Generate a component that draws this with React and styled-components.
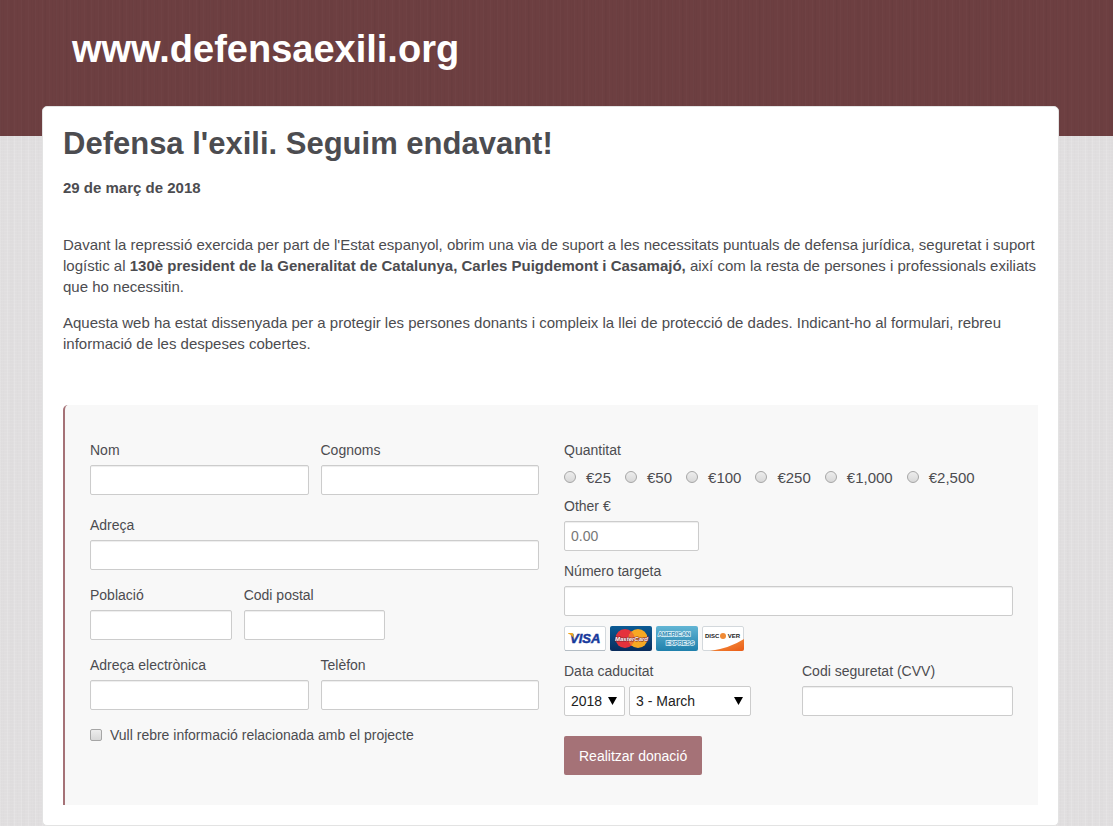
import React from "react";
import styled, { createGlobalStyle } from "styled-components";

const GlobalStyle = createGlobalStyle`
  *, *::before, *::after { box-sizing: border-box; }
  body {
    margin: 0;
    color: #4c4c50;
    font: 15px/21px "Liberation Sans", Arial, sans-serif;
    background-color: #e0dedf;
    background-image:
      repeating-linear-gradient(90deg, rgba(255,255,255,0.14) 0 1px, transparent 1px 3px, rgba(0,0,0,0.008) 3px 4px, transparent 4px 7px),
      repeating-linear-gradient(90deg, rgba(0,0,0,0.008) 0 2px, transparent 2px 11px),
      repeating-linear-gradient(0deg, rgba(255,255,255,0.06) 0 1px, transparent 1px 3px);
  }
  input, select, button { font-family: inherit; }
`;

const Header = styled.header`
  height: 136px;
  padding: 24px 72px;
  background-color: #6d3f41;
  background-image:
    repeating-linear-gradient(90deg, rgba(255,255,255,0.015) 0 1px, transparent 1px 3px, rgba(0,0,0,0.02) 3px 4px, transparent 4px 7px),
    repeating-linear-gradient(90deg, rgba(0,0,0,0.015) 0 2px, transparent 2px 11px);
`;

const SiteName = styled.h1`
  margin: 0;
  color: #fff;
  font-size: 38px;
  line-height: 50px;
`;

const Card = styled.main`
  margin: -30px 54px 0 42px;
  padding: 17px 20px 20px;
  background: #fff;
  border: 1px solid #e3e3e3;
  border-radius: 5px;
`;

const Title = styled.h2`
  margin: 0;
  font-size: 31px;
  line-height: 40px;
`;

const DateLine = styled.p`
  margin: 13px 0 36px;
  font-size: 15px;
  font-weight: bold;
`;

const Paragraph = styled.p`
  margin: 0 0 15px;
`;

const Form = styled.form`
  display: grid;
  grid-template-columns: 1fr 1fr;
  gap: 25px;
  margin-top: 51px;
  padding: 35px 25px 30px;
  background: #f8f8f8;
  border-left: 2px solid #a57277;
  border-radius: 5px 0 0 0;
`;

const Column = styled.div`
  min-width: 0;
`;

const Row = styled.div`
  display: grid;
  grid-template-columns: repeat(${(p) => p.$columns || 1}, 1fr);
  gap: 12px;
  margin-bottom: ${(p) => p.$gap || 15}px;
`;

const Label = styled.label`
  display: block;
  margin-bottom: 5px;
  font-size: 14px;
  line-height: 20px;
`;

const Legend = styled.legend`
  padding: 0;
  margin-bottom: 5px;
  font-size: 14px;
  line-height: 20px;
`;

const Input = styled.input`
  display: block;
  width: ${(p) => p.$width || "100%"};
  height: 30px;
  padding: 4px 6px;
  color: #555;
  font-size: 14px;
  background: #fff;
  border: 1px solid #ccc;
  border-radius: 2px;
  box-shadow: inset 0 1px 1px rgba(0, 0, 0, 0.075);
  &::placeholder { color: #777; }
`;

const Group = styled.fieldset`
  min-width: 0;
  margin: 0;
  padding: 0;
  border: 0;
`;

const Amounts = styled.div`
  display: flex;
  flex-wrap: wrap;
  gap: 14px;
  padding: 2px 0 8px;
`;

const Choice = styled.label`
  display: flex;
  align-items: center;
  gap: ${(p) => p.$gap || 10}px;
  font-size: ${(p) => p.$size || 15}px;
  line-height: 21px;
`;

const Tick = styled.input`
  appearance: none;
  width: 12px;
  height: 12px;
  margin: 0 0 1px;
  background: linear-gradient(#ededed, #d8d8d8);
  border: 1px solid #a6a6a6;
  border-radius: ${(p) => (p.type === "radio" ? "50%" : "2px")};
  &:checked { background: #777; }
`;

const Logos = styled.div`
  display: flex;
  gap: 4px;
  margin: -5px 0 10px;
  svg { display: block; }
`;

const CardRow = styled.div`
  display: flex;
  justify-content: space-between;
  align-items: flex-start;
  margin-bottom: 20px;
`;

const CvvField = styled.div`
  width: 47%;
`;

const Selects = styled.div`
  display: flex;
  gap: 4px;
`;

const SelectBox = styled.span`
  display: grid;
  align-items: center;
  width: ${(p) => p.$width}px;
  > * { grid-area: 1 / 1; }
  svg { justify-self: end; margin-right: 8px; pointer-events: none; }
`;

const Select = styled.select`
  appearance: none;
  width: 100%;
  height: 30px;
  padding: 0 6px;
  color: #222;
  font-size: 14px;
  background: #fff;
  border: 1px solid #ccc;
  border-radius: 2px;
`;

const Submit = styled.button`
  display: block;
  height: 39px;
  padding: 0 15px;
  color: #fff;
  font-size: 14px;
  background: #a57277;
  border: 0;
  border-radius: 2px;
`;

function Field({ id, label, ...rest }) {
  return (
    <div>
      <Label htmlFor={id}>{label}</Label>
      <Input id={id} type="text" {...rest} />
    </div>
  );
}

function Dropdown({ label, width, options }) {
  return (
    <SelectBox $width={width}>
      <Select aria-label={label}>
        {options.map((o) => <option key={o}>{o}</option>)}
      </Select>
      <svg width="9" height="8" aria-hidden="true"><path d="M0 0H9L4.500 8Z" fill="#000" /></svg>
    </SelectBox>
  );
}

function CardLogos() {
  const font = { fontFamily: "Liberation Sans, sans-serif", fontWeight: "bold" };
  return (
    <Logos>
      <svg width="42" height="25" role="img" aria-label="Visa">
        <rect x=".5" y=".5" width="41" height="24" rx="1.500" fill="#fff" stroke="#d3d8dc" />
        <path d="M1 24.500H41" stroke="#b5bdc4" />
        <text x="6" y="17" fontSize="13" fontStyle="italic" fill="#17399b" stroke="#17399b" strokeWidth=".5" {...font}>VISA</text>
        <path d="M4 7H8Q9.500 7 9.500 9L10 13Q8.500 9 4 7.500Z" fill="#f0a51c" />
      </svg>
      <svg width="42" height="25" role="img" aria-label="MasterCard">
        <defs>
          <linearGradient id="mc" x2="0" y2="1"><stop stopColor="#0b5b95" /><stop offset="1" stopColor="#0a2c5c" /></linearGradient>
        </defs>
        <rect width="42" height="25" rx="2" fill="url(#mc)" />
        <circle cx="15" cy="12.500" r="9.500" fill="#e4323c" />
        <circle cx="28" cy="12.500" r="9.500" fill="#f7a823" />
        <path d="M21.500 5.500A9.500 9.500 0 0 1 21.500 19.500A9.500 9.500 0 0 1 21.500 5.500Z" fill="#ee7430" />
        <text x="21.500" y="15" fontSize="6" fontStyle="italic" textAnchor="middle" fill="#fff" stroke="#7c2431" strokeWidth="1" paintOrder="stroke" {...font}>MasterCard</text>
      </svg>
      <svg width="42" height="25" role="img" aria-label="American Express">
        <defs>
          <linearGradient id="ax" x2="0" y2="1"><stop stopColor="#62b5d4" /><stop offset="1" stopColor="#1f80ac" /></linearGradient>
        </defs>
        <rect width="42" height="25" rx="2" fill="url(#ax)" />
        <text x="2" y="10" fontSize="6" fill="#3189b2" stroke="#d9eff7" strokeWidth="1.500" paintOrder="stroke" {...font}>AMERICAN</text>
        <text x="10" y="19" fontSize="6" fill="#3189b2" stroke="#d9eff7" strokeWidth="1.500" paintOrder="stroke" {...font}>EXPRESS</text>
      </svg>
      <svg width="42" height="25" role="img" aria-label="Discover">
        <defs>
          <linearGradient id="dc" x2="1" y2="1"><stop stopColor="#f7a04a" /><stop offset="1" stopColor="#ea5b16" /></linearGradient>
        </defs>
        <rect x=".5" y=".5" width="41" height="24" rx="1.500" fill="#fff" stroke="#d3d8dc" />
        <path d="M8 25Q28 22 42 13V23Q42 25 40 25Z" fill="url(#dc)" />
        <circle cx="21" cy="10" r="3" fill="#f08a35" />
        <text x="3" y="12" fontSize="6" fill="#222" {...font}>DISC</text>
        <text x="38" y="12" fontSize="6" textAnchor="end" fill="#222" {...font}>VER</text>
      </svg>
    </Logos>
  );
}

const amounts = ["€25", "€50", "€100", "€250", "€1,000", "€2,500"];
const years = ["2018", "2019", "2020", "2021", "2022", "2023"];
const months = ["3 - March", "4 - April", "5 - May", "6 - June", "7 - July", "8 - August", "9 - September"];

export default function App() {
  return (
    <>
      <GlobalStyle />
      <Header>
        <SiteName>www.defensaexili.org</SiteName>
      </Header>
      <Card>
        <Title>Defensa l'exili. Seguim endavant!</Title>
        <DateLine>29 de març de 2018</DateLine>
        <Paragraph>
          Davant la repressió exercida per part de l'Estat espanyol, obrim una via de suport a les necessitats
          puntuals de defensa jurídica, seguretat i suport logístic al{" "}
          <strong>130è president de la Generalitat de Catalunya, Carles Puigdemont i Casamajó,</strong> així com la
          resta de persones i professionals exiliats que ho necessitin.
        </Paragraph>
        <Paragraph>
          Aquesta web ha estat dissenyada per a protegir les persones donants i compleix la llei de protecció de
          dades. Indicant-ho al formulari, rebreu informació de les despeses cobertes.
        </Paragraph>
        <Form onSubmit={(e) => e.preventDefault()}>
          <Column>
            <Row $columns={2} $gap={20}>
              <Field id="nom" label="Nom" />
              <Field id="cognoms" label="Cognoms" />
            </Row>
            <Row>
              <Field id="adreca" label="Adreça" />
            </Row>
            <Row $columns={3}>
              <Field id="poblacio" label="Població" />
              <Field id="codi-postal" label="Codi postal" />
            </Row>
            <Row $columns={2}>
              <Field id="email" label="Adreça electrònica" type="email" />
              <Field id="telefon" label="Telèfon" type="tel" />
            </Row>
            <Choice $size={14} $gap={8}>
              <Tick type="checkbox" />
              Vull rebre informació relacionada amb el projecte
            </Choice>
          </Column>
          <Column>
            <Group>
              <Legend>Quantitat</Legend>
              <Amounts>
                {amounts.map((a) => (
                  <Choice key={a}>
                    <Tick type="radio" name="quantitat" value={a} />
                    {a}
                  </Choice>
                ))}
              </Amounts>
            </Group>
            <Row $gap={10}>
              <Field id="other" label="Other €" placeholder="0.00" $width="30%" />
            </Row>
            <Row>
              <Field id="targeta" label="Número targeta" />
            </Row>
            <CardLogos />
            <CardRow>
              <Group>
                <Legend>Data caducitat</Legend>
                <Selects>
                  <Dropdown label="Any" width={61} options={years} />
                  <Dropdown label="Mes" width={122} options={months} />
                </Selects>
              </Group>
              <CvvField>
                <Field id="cvv" label="Codi seguretat (CVV)" />
              </CvvField>
            </CardRow>
            <Submit type="submit">Realitzar donació</Submit>
          </Column>
        </Form>
      </Card>
    </>
  );
}
